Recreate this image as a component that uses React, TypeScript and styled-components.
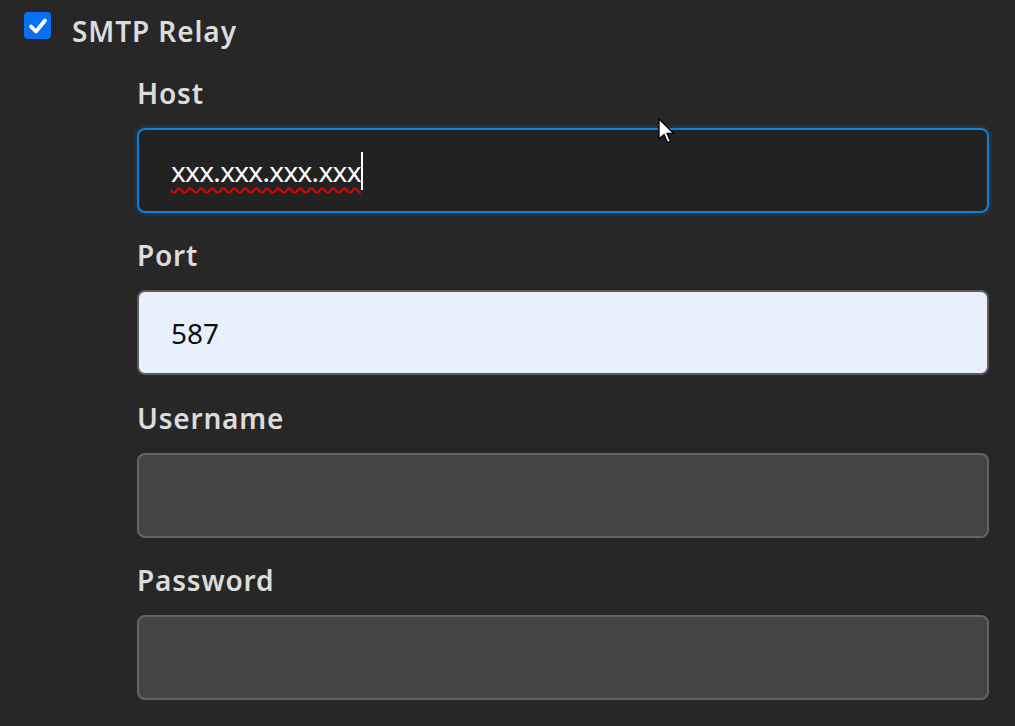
import styled, { createGlobalStyle } from "styled-components";

const GlobalStyle = createGlobalStyle`
  html, body {
    margin: 0;
    padding: 0;
    background: #272727;
  }
  body {
    font-family: "Noto Sans", "Open Sans", sans-serif;
    color: #dcdcdc;
  }
`;

const Page = styled.div`
  position: relative;
  width: 1015px;
  height: 726px;
  overflow: hidden;
  background: #272727;
  padding: 12px 0 0 24px;
  box-sizing: border-box;
`;

const ToggleRow = styled.div`
  display: flex;
  align-items: flex-start;
  gap: 21px;
  height: 42px;
`;

const CheckBox = styled.div`
  width: 27px;
  height: 27px;
  border-radius: 4px;
  background: #0a70f2;
  display: flex;
  align-items: center;
  justify-content: center;
`;

const ToggleLabel = styled.span`
  font-size: 28px;
  font-weight: 600;
  line-height: 34px;
  letter-spacing: 0.9px;
  margin-top: 2px;
  color: #dcdcdc;
`;

const Fields = styled.div`
  margin-left: 113px;
  width: 852px;
  display: flex;
  flex-direction: column;
  gap: 25.4px;
  padding-top: 22px;
`;

const Field = styled.div`
  display: flex;
  flex-direction: column;
  gap: 18px;
`;

const Label = styled.label`
  font-size: 28px;
  font-weight: 600;
  line-height: 34px;
  letter-spacing: 0.8px;
  color: #dcdcdc;
`;

type Variant = "focus" | "filled" | "empty";

const Box = styled.div<{ $variant: Variant }>`
  height: 85px;
  box-sizing: border-box;
  border-radius: 8px;
  border: 2px solid
    ${(p) =>
      p.$variant === "focus" ? "#0a7fdc" : p.$variant === "filled" ? "#5c5c5c" : "#646464"};
  background: ${(p) =>
    p.$variant === "focus" ? "#222222" : p.$variant === "filled" ? "#e8f0fe" : "#444444"};
  box-shadow: ${(p) =>
    p.$variant === "focus" ? "0 0 0 3px rgba(10, 127, 220, 0.12)" : "none"};
  display: flex;
  align-items: center;
  padding-left: 32px;
  font-size: 28px;
  color: ${(p) => (p.$variant === "filled" ? "#111" : "#ffffff")};
`;

const Misspelled = styled.span`
  letter-spacing: -0.7px;
  text-decoration: underline wavy #ee0000;
  text-decoration-thickness: 2px;
  text-underline-offset: 5px;
`;

const Caret = styled.span`
  display: inline-block;
  width: 2px;
  height: 38px;
  background: #ffffff;
  vertical-align: middle;
`;

const Pointer = styled.svg`
  position: absolute;
  left: 658px;
  top: 118px;
`;

export default function App() {
  return (
    <Page>
      <GlobalStyle />
      <ToggleRow>
        <CheckBox>
          <svg width="22" height="22" viewBox="0 0 22 22">
            <path
              d="M4 11.5 L9 16.5 L18 5.5"
              fill="none"
              stroke="#fff"
              strokeWidth="3.8"
              strokeLinecap="round"
              strokeLinejoin="round"
            />
          </svg>
        </CheckBox>
        <ToggleLabel>SMTP Relay</ToggleLabel>
      </ToggleRow>
      <Fields>
        <Field>
          <Label>Host</Label>
          <Box $variant="focus">
            <Misspelled>xxx.xxx.xxx.xxx</Misspelled>
            <Caret />
          </Box>
        </Field>
        <Field>
          <Label>Port</Label>
          <Box $variant="filled">587</Box>
        </Field>
        <Field>
          <Label>Username</Label>
          <Box $variant="empty" />
        </Field>
        <Field>
          <Label>Password</Label>
          <Box $variant="empty" />
        </Field>
      </Fields>
      <Pointer width="20" height="28" viewBox="0 0 20 28">
        <path
          d="M1 1 L1 21 L6 16.5 L9.5 24.5 L12.5 23.2 L9 15.3 L15.5 15.3 Z"
          fill="#fff"
          stroke="#000"
          strokeWidth="1.3"
          strokeLinejoin="miter"
        />
      </Pointer>
    </Page>
  );
}
